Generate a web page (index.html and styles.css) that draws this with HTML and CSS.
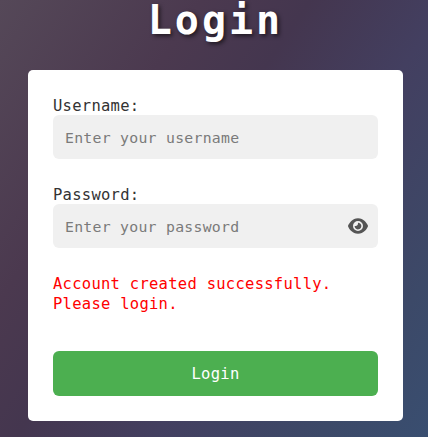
FILE: index.html
```html
<!DOCTYPE html>
<html lang="en">
<head>
<meta charset="UTF-8">
<title>Login</title>
<link rel="stylesheet" href="styles.css">
</head>
<body>
<main class="page">
  <h1 class="title">Login</h1>
  <form class="card">
    <label class="label" for="username">Username:</label>
    <input class="input" id="username" type="text" placeholder="Enter your username">
    <label class="label" for="password">Password:</label>
    <div class="field">
      <input class="input" id="password" type="password" placeholder="Enter your password">
      <svg class="eye" viewBox="0 0 576 512" aria-hidden="true"><path fill="currentColor" d="M288 32c-81 0-146 37-193 80C49 156 18 208 3 244c-3 8-3 16 0 24 15 36 46 88 92 132 47 43 112 80 193 80s146-37 193-80c46-44 77-96 92-132 3-8 3-16 0-24-15-36-46-88-92-132C434 69 369 32 288 32zM144 256a144 144 0 1 1 288 0 144 144 0 1 1-288 0zm144-64c0 35-29 64-64 64-7 0-14-1-20-3-6-2-12 2-12 8 0 7 1 14 3 21 14 51 67 82 118 68s82-67 68-118c-11-41-48-69-88-71-6 0-9 6-8 11 2 6 3 13 3 20z"/></svg>
    </div>
    <p class="message">Account created successfully. Please login.</p>
    <button class="button" type="button">Login</button>
  </form>
</main>
</body>
</html>
```
FILE: styles.css
```css
* { box-sizing: border-box; }
body {
  margin: 0;
  height: 437px;
  overflow: hidden;
  background: linear-gradient(124deg, #554858 0%, #4b394f 28%, #44364f 43%, #433f60 62%, #3c4968 85%, #394e70 100%);
  font-family: "DejaVu Sans Mono", "Liberation Mono", monospace;
  font-size: 15.5px;
  line-height: 20px;
  letter-spacing: .27px;
  color: #333;
}
.page { padding: 0 25px 0 28px; }
.title {
  margin: 0 0 30px;
  height: 40px;
  font-size: 40px;
  line-height: 40px;
  letter-spacing: 3px;
  text-align: center;
  color: #fff;
  text-shadow: 2px 2px 4px rgba(0, 0, 0, .6);
}
.card {
  height: 351px;
  padding: 25px;
  border-radius: 5px;
  background: #fff;
}
.label { display: block; height: 20px; line-height: 22px; }
.input {
  display: block;
  width: 100%;
  height: 44px;
  margin: 0 0 25px;
  padding: 0 12px;
  border: 0;
  border-radius: 6px;
  background: #f0f0f0;
  font: inherit;
  font-size: 14.8px;
  letter-spacing: .27px;
}
.input::placeholder { color: #7a7a7a; }
.field { position: relative; }
.eye {
  position: absolute;
  top: 13px;
  right: 10px;
  width: 20px;
  height: 18px;
  color: #555;
}
.message { height: 41px; margin: 0 0 37px; padding-top: 1px; color: #f00; }
.button {
  display: block;
  width: 100%;
  height: 45px;
  padding: 0;
  border: 0;
  border-radius: 6px;
  background: #4caf50;
  color: #fff;
  font: inherit;
  letter-spacing: inherit;
}
```
